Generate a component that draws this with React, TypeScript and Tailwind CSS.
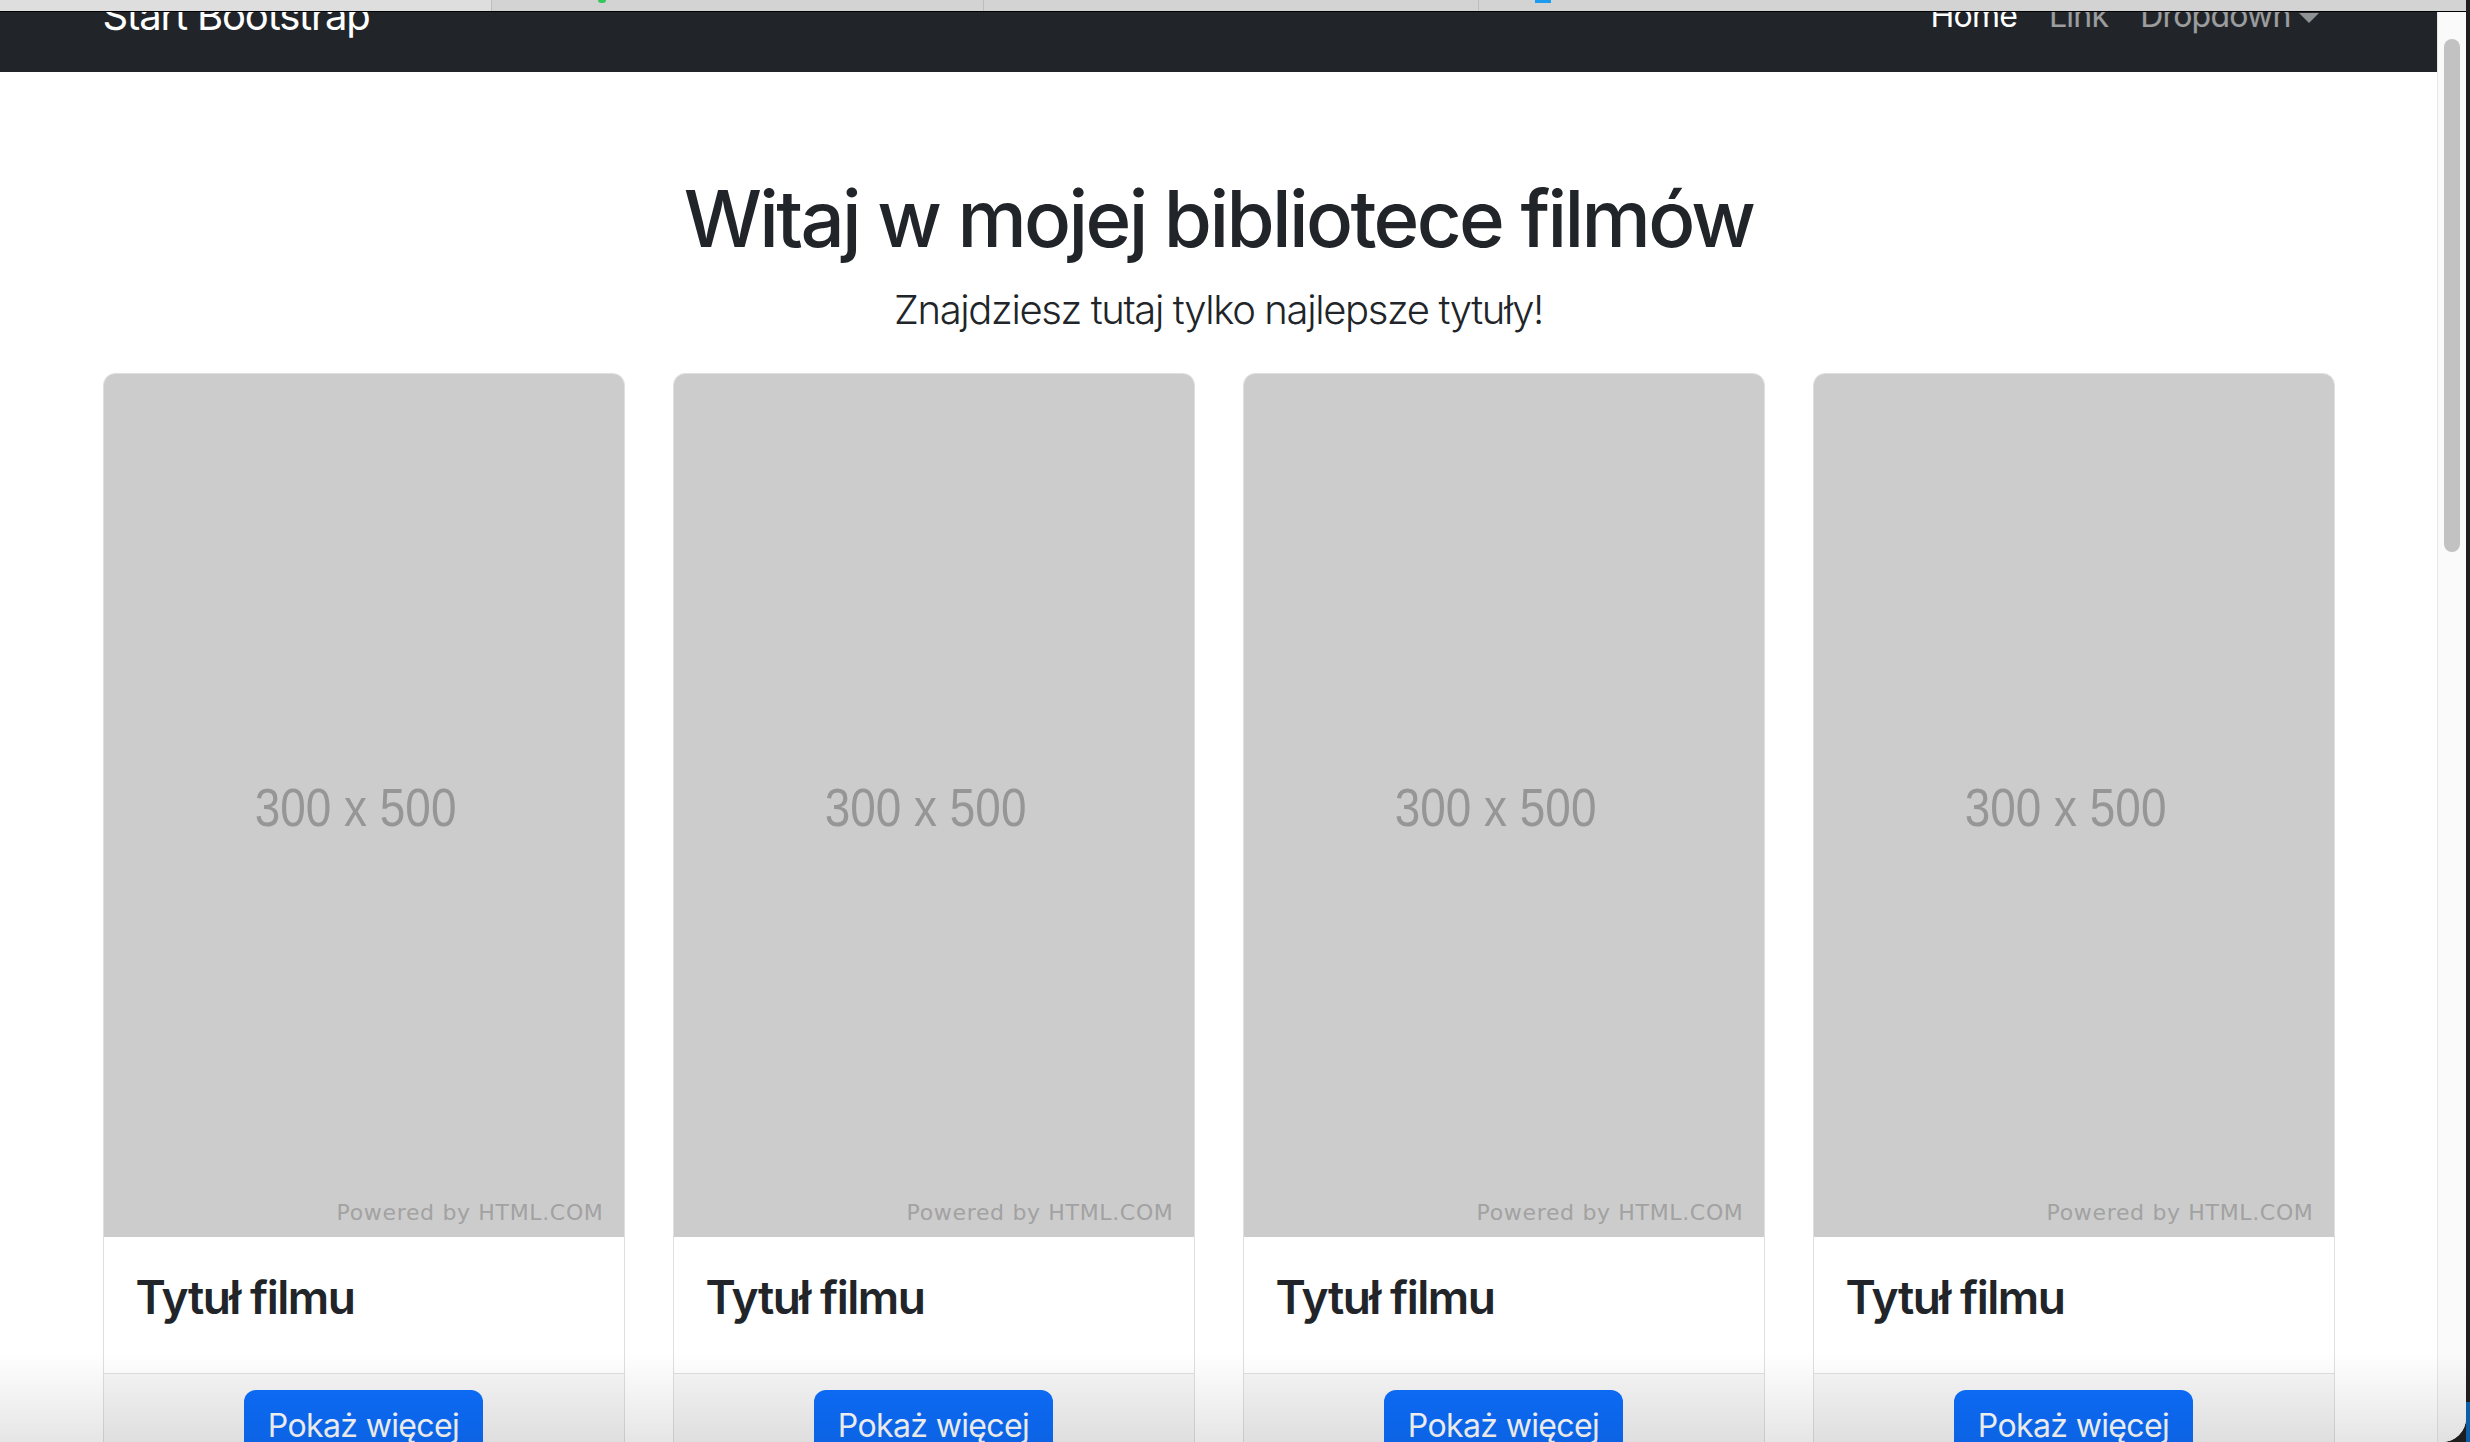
import React from "react"

const movies = [1, 2, 3, 4].map((n) => ({ id: n, title: "Tytuł filmu" }))

function TabStrip() {
  return (
    <div className="flex h-[12px] shrink-0 border-b border-black bg-[#d3d3d3]">
      <div className="relative w-[492px] border-r border-[#bdbdbd] bg-[#dedede]" />
      <div className="relative w-[492px] border-r border-[#bdbdbd]">
        <div className="absolute left-[106px] top-0 h-[3px] w-[8px] rounded-b-full bg-[#34c759]" />
      </div>
      <div className="relative w-[495px] border-r border-[#bdbdbd]" />
      <div className="relative flex-1">
        <div className="absolute left-[56px] top-0 h-[3px] w-[16px] bg-[#1a9bf0]" />
      </div>
    </div>
  )
}

function Navbar() {
  return (
    <nav className="h-[112px] bg-[#212529]">
      <div className="mx-auto flex h-full w-[2280px] items-center justify-between px-6">
        <a className="py-[10px] text-[40px] leading-[60px] tracking-[-0.029em] text-white">
          Start Bootstrap
        </a>
        <ul className="flex items-center text-[32px] leading-[48px] tracking-[-0.025em]">
          <li className="px-4 py-4 text-white">Home</li>
          <li className="px-4 py-4 text-white/55">Link</li>
          <li className="flex items-center px-4 py-4 text-white/55">
            Dropdown
            <span className="ml-[8px] mt-[4px] inline-block h-0 w-0 border-x-[10px] border-t-[10px] border-x-transparent border-t-[#8f9193]" />
          </li>
        </ul>
      </div>
    </nav>
  )
}

function MovieCard({ title }: { title: string }) {
  return (
    <div className="flex flex-col overflow-hidden rounded-[12px] border border-[#dfdfdf] bg-white">
      <div className="relative flex h-[863px] items-center justify-center bg-[#cccccc]">
        <span className="-ml-[16px] mt-[2px] inline-block scale-x-[0.85] font-['Liberation_Sans',sans-serif] text-[54px] leading-none text-[#969696]">
          300 x 500
        </span>
        <span className="absolute bottom-[13px] right-[20px] font-['DejaVu_Sans',sans-serif] text-[22px] leading-none tracking-[0.03em] text-[#a2a2a2]">
          Powered by HTML.COM
        </span>
      </div>
      <div className="px-8 pb-[50px] pt-[34px]">
        <h5 className="text-[46px] font-semibold leading-[52px] tracking-[-0.032em] text-[#212529]">
          {title}
        </h5>
      </div>
      <div className="border-t border-[#dfdfdf] bg-[#f7f7f7] px-8 py-4 text-center">
        <button className="rounded-[12px] bg-[#0d6efd] px-6 py-3 text-[32px] leading-[48px] tracking-[-0.02em] text-white">
          Pokaż więcej
        </button>
      </div>
    </div>
  )
}

function Scrollbar() {
  return (
    <div className="w-[29px] shrink-0 border-l border-[#e6e6e6] bg-[#fafafa] pl-[6px] pt-[27px]">
      <div className="h-[513px] w-[16px] rounded-full bg-[#c2c2c2]" />
    </div>
  )
}

export default function App() {
  return (
    <div className="flex h-[1442px] w-[2470px] overflow-hidden bg-[#1e1e1e] font-['Inter',sans-serif]">
      <div className="relative flex h-full w-[2466px] flex-col overflow-hidden rounded-br-[24px] bg-white">
        <TabStrip />
        <div className="flex min-h-0 flex-1">
          <div className="min-w-0 flex-1 overflow-hidden">
            {/* page is scrolled down a little, so the navbar top is hidden */}
            <div className="-mt-[52px]">
              <Navbar />
              <h1 className="mt-[99px] text-center text-[78px] font-medium leading-[96px] tracking-[-0.034em] text-[#212529]">
                Witaj w mojej bibliotece filmów
              </h1>
              <p className="mt-[13px] text-center text-[40px] font-light leading-[60px] tracking-[-0.034em] text-[#212529]">
                Znajdziesz tutaj tylko najlepsze tytuły!
              </p>
              <div className="mx-auto mt-[33px] grid w-[2280px] grid-cols-4 gap-12 px-6">
                {movies.map((m) => (
                  <MovieCard key={m.id} title={m.title} />
                ))}
              </div>
            </div>
          </div>
          <Scrollbar />
        </div>
        <div className="pointer-events-none absolute inset-x-0 bottom-0 h-[90px] bg-gradient-to-b from-transparent to-black/10" />
      </div>
      <div className="flex w-[4px] flex-col">
        <div className="flex-1 bg-[#1e1e1e]" />
        <div className="h-[40px] bg-[#0a5fa8]" />
      </div>
    </div>
  )
}
